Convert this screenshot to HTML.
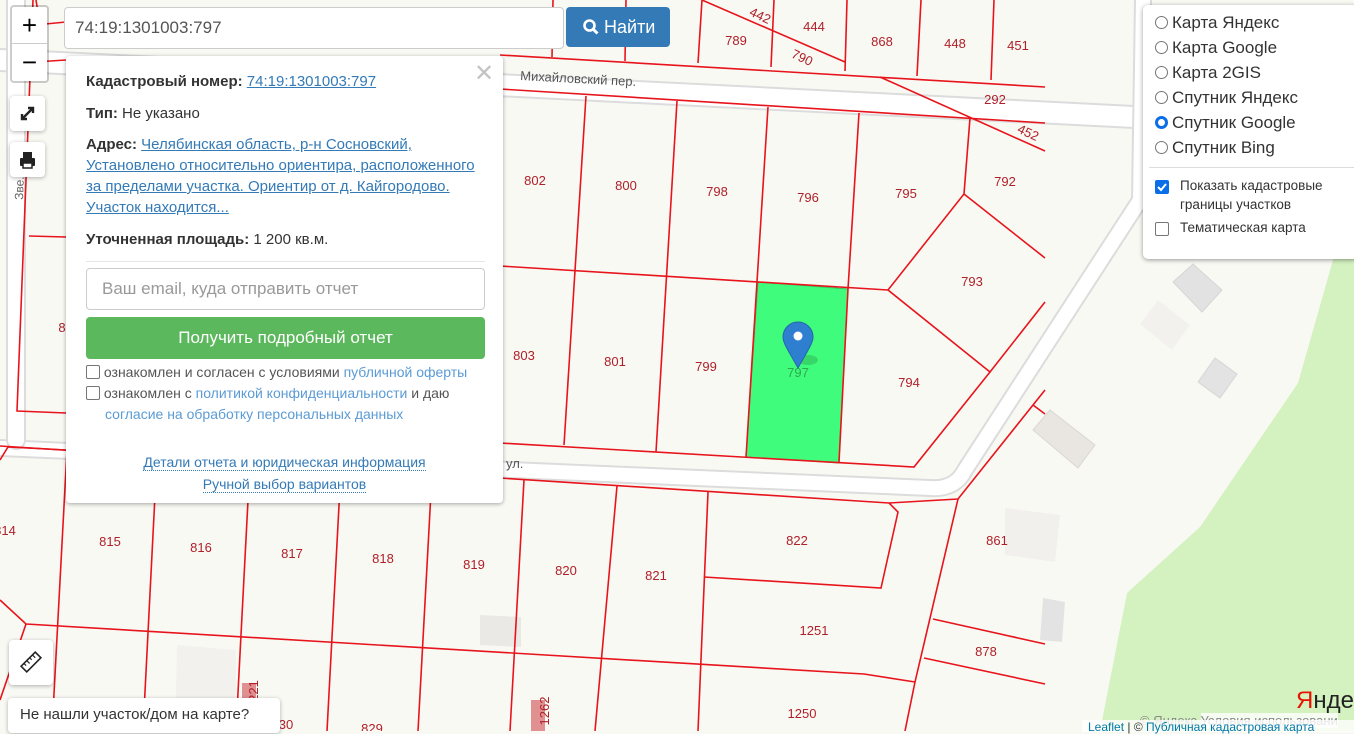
<!DOCTYPE html>
<html><head><meta charset="utf-8">
<style>
*{box-sizing:border-box;margin:0;padding:0}
body{width:1354px;height:731px;overflow:hidden;position:relative;background:#f9f9f4;font-family:"Liberation Sans",Arial,sans-serif;}
.abs{position:absolute}
.ctl{position:absolute;background:#fff;border:2px solid rgba(0,0,0,.2);border-radius:4px;background-clip:padding-box}
.popup{position:absolute;left:66px;top:56px;width:437px;height:447px;background:#fff;border-radius:4px;box-shadow:0 1px 4px rgba(0,0,0,.35);font-size:15px;color:#333}
.popup a{color:#337ab7;text-decoration:underline}
.popup b{font-weight:bold}
.cb{display:inline-block;width:14px;height:14px;border:1px solid #767676;border-radius:2px;background:#fff;vertical-align:-2px}
.lnk{color:#5b9bd5}
.layers{position:absolute;left:1143px;top:5px;width:215px;height:254px;background:#fff;border-radius:5px;box-shadow:0 1px 5px rgba(0,0,0,.4);color:#333}
.r{position:absolute;left:12px;font-size:17px;white-space:nowrap}
.rad{display:inline-block;width:13px;height:13px;border:1px solid #767676;border-radius:50%;vertical-align:-1px;margin-right:4px;background:#fff}
</style></head><body>
<svg class="abs" style="left:0;top:0" width="1354" height="731" viewBox="0 0 1354 731">
<polygon points="1354,180 1333,260 1298,383 1200,527 1127,593 1100,731 1354,731" fill="#d4f1c0"/>
<g fill="none" stroke-linecap="round" stroke-linejoin="round">
<path d="M0,60 L1354,128" stroke="#dcdcdc" stroke-width="24"/>
<path d="M0,60 L1354,128" stroke="#fff" stroke-width="20"/>
<path d="M0,448 L930,488 Q955,490 965,470 L1140,200 L1143,0" stroke="#dcdcdc" stroke-width="18"/>
<path d="M0,448 L930,488 Q955,490 965,470 L1140,200 L1143,0" stroke="#fff" stroke-width="14"/>
<path d="M16,0 L16,440" stroke="#dcdcdc" stroke-width="20"/>
<path d="M16,0 L16,440" stroke="#fff" stroke-width="16"/>
</g>
<g>
<polygon points="1173,282 1193,264 1222,290 1202,312" fill="#e2e2e2" stroke="#d6d6d6"/>
<polygon points="1140,324 1158,300 1190,325 1172,350" fill="#f2f1ee"/>
<polygon points="1198,382 1215,358 1237,374 1220,398" fill="#e3e3e3" stroke="#d6d6d6"/>
<polygon points="1033,430 1050,410 1095,445 1078,468" fill="#e9e6e2" stroke="#dbd8d4"/>
<polygon points="1005,508 1060,515 1055,562 1005,555" fill="#f2f0ed"/>
<polygon points="1043,598 1065,602 1062,642 1040,640" fill="#e3e3e3"/>
<polygon points="480,615 521,617 521,647 480,645" fill="#ebe9e6"/>
<polygon points="177,645 236,650 236,731 175,731" fill="#f3f1ee"/>
<rect x="242" y="683" width="14" height="48" fill="#e09090"/>
<rect x="531" y="700" width="14" height="31" fill="#e09090"/>
</g>
<polygon points="758,282 848,289 839,463 746,457" fill="#40fc7c" stroke="#39c060"/>
<g stroke="#e8141c" stroke-width="1.6" fill="none">
<path d="M33,0 L17,411 L66,413"/><path d="M29,236 L66,237"/>
<path d="M0,460 L8,447 L66,450"/>
<path d="M36,0 L40,25"/><path d="M35,25 L66,22"/><path d="M35,62 L66,60"/>
<path d="M500,55 L1045,87"/><path d="M500,89 L1045,123"/>
<path d="M553,0 L552,57"/><path d="M626,0 L625,61"/>
<path d="M702,0 L698,63"/><path d="M774,0 L771,67"/><path d="M847,0 L845,71"/><path d="M921,0 L917,76"/><path d="M994,0 L991,80"/>
<path d="M702,0 L845,62"/><path d="M880,77 L1045,151"/>
<path d="M586,96 L564,445"/><path d="M677,101 L656,452"/><path d="M768,107 L746,457"/><path d="M859,113 L848,289 L839,462"/>
<path d="M970,118 L964,194 L888,290 L990,372 L1045,302"/><path d="M964,194 L1045,258"/>
<path d="M500,266 L888,290"/><path d="M990,372 L914,467 L500,443"/>
<path d="M0,446 L889,503 L958,499 L1045,390"/><path d="M1033,405 L1045,414"/>
<path d="M889,503 L898,512 L881,588 L704,577"/>
<path d="M958,499 L915,682 L905,731"/>
<path d="M0,600 L26,624 L864,674 L915,682"/><path d="M26,624 L0,700"/>
<path d="M933,619 L1045,644"/><path d="M924,658 L1045,684"/>
<path d="M67,450 L52,731"/><path d="M157,456 L143,731"/><path d="M250,462 L236,731"/><path d="M341,468 L327,731"/><path d="M432,474 L418,731"/><path d="M524,480 L510,731"/><path d="M617,486 L595,731"/><path d="M708,492 L698,731"/>
</g>
<g font-family="Liberation Sans,Arial,sans-serif" font-size="13" fill="#b0202a" text-anchor="middle">
<text x="535" y="185">802</text><text x="626" y="190">800</text><text x="717" y="196">798</text><text x="808" y="202">796</text><text x="906" y="198">795</text><text x="1005" y="186">792</text><text x="972" y="286">793</text>
<text x="524" y="360">803</text><text x="615" y="366">801</text><text x="706" y="371">799</text><text x="909" y="387">794</text>
<text x="798" y="377" fill="#2fa850">797</text>
<text x="814" y="31">444</text><text x="736" y="45">789</text><text x="882" y="46">868</text><text x="955" y="48">448</text><text x="1018" y="50">451</text><text x="995" y="104">292</text>
<text x="760" y="20" transform="rotate(25 760 16)">442</text><text x="802" y="62" transform="rotate(25 802 58)">790</text><text x="1028" y="137" transform="rotate(25 1028 133)">452</text>
<text x="62" y="332">8</text>
<text x="5" y="535">814</text><text x="110" y="546">815</text><text x="201" y="552">816</text><text x="292" y="558">817</text><text x="383" y="563">818</text><text x="474" y="569">819</text><text x="566" y="575">820</text><text x="656" y="580">821</text><text x="797" y="545">822</text><text x="997" y="545">861</text><text x="814" y="635">1251</text><text x="986" y="656">878</text><text x="802" y="718">1250</text><text x="372" y="733">829</text><text x="286" y="729">30</text>
<text x="262" y="695" transform="rotate(-90 258 695)">221</text><text x="553" y="715" transform="rotate(-90 549 715)">1262</text>
</g>
<text x="520" y="80" font-family="Liberation Sans,Arial,sans-serif" font-size="13" fill="#555" transform="rotate(3 520 80)">Михайловский пер.</text>
<text x="506" y="468" font-family="Liberation Sans,Arial,sans-serif" font-size="13" fill="#555">ул.</text>
<text x="23" y="200" font-family="Liberation Sans,Arial,sans-serif" font-size="12" fill="#666" transform="rotate(-88 23 200)">Зве...я у</text>
<ellipse cx="808" cy="360" rx="10" ry="5" fill="rgba(0,0,0,.15)"/>
<path d="M798,368 C788,350 783,343 783,337 A15,15 0 0 1 813,337 C813,343 808,350 798,368 Z" fill="#2f7fd0" stroke="#2467ab"/>
<circle cx="798" cy="336" r="4.5" fill="#fff"/>
<text x="1296" y="708" font-family="Liberation Sans,Arial,sans-serif" font-size="24" fill="#e61400">Я<tspan fill="#222">ндекс</tspan></text>
</svg>

<div class="ctl" style="left:10px;top:5px;width:39px;height:78px">
<div style="height:37px;border-bottom:1px solid #ccc;text-align:center;font-size:26px;line-height:36px;color:#000">+</div>
<div style="text-align:center;font-size:26px;line-height:36px;color:#000">−</div>
</div>
<div class="ctl" style="left:10px;top:96px;width:35px;height:35px;border:none;box-shadow:0 1px 4px rgba(0,0,0,.3)">
<svg width="35" height="35"><path d="M12,23 L23,12 M18,12 H23 V17 M12,18 V23 H17" stroke="#222" stroke-width="2.4" fill="none"/></svg></div>
<div class="ctl" style="left:10px;top:142px;width:35px;height:35px;border:none;box-shadow:0 1px 4px rgba(0,0,0,.3)">
<svg width="35" height="35"><rect x="13" y="10" width="9" height="6" fill="#222"/><rect x="10" y="16" width="15" height="8" rx="1" fill="#222"/><rect x="13" y="21" width="9" height="5" fill="#fff" stroke="#222" stroke-width="1.5"/></svg></div>
<div class="ctl" style="left:9px;top:640px;width:44px;height:45px;border:none;box-shadow:0 1px 4px rgba(0,0,0,.3)">
<svg width="44" height="45"><g transform="rotate(-45 22 22)"><rect x="12" y="18" width="20" height="8" fill="none" stroke="#222" stroke-width="1.6"/><path d="M16,18 v3 M20,18 v4 M24,18 v3 M28,18 v4" stroke="#222" stroke-width="1.2"/></g></svg></div>

<div class="abs" style="left:64px;top:7px;width:500px;height:42px;background:#fff;border:1px solid #ccc;border-radius:4px;font-size:17px;color:#555;padding:10px 0 0 10px">74:19:1301003:797</div>
<div class="abs" style="left:566px;top:7px;width:104px;height:40px;background:#337ab7;border-radius:4px;color:#fff;font-size:18px;line-height:40px;padding-left:17px">
<svg width="16" height="16" style="vertical-align:-2px"><circle cx="6.5" cy="6.5" r="5" stroke="#fff" stroke-width="2.6" fill="none"/><path d="M10,10 L14.5,14.5" stroke="#fff" stroke-width="3"/></svg> Найти</div>

<div class="popup">
<div class="abs" style="left:408px;top:3px;font-size:24px;color:#c3c3c3">✕</div>
<div class="abs" style="left:20px;top:15px;line-height:21px;width:395px">
<div><b>Кадастровый номер:</b> <a>74:19:1301003:797</a></div>
<div style="margin-top:11px"><b>Тип:</b> Не указано</div>
<div style="margin-top:10px"><b>Адрес:</b> <a>Челябинская область, р-н Сосновский, Установлено относительно ориентира, расположенного за пределами участка. Ориентир от д. Кайгородово. Участок находится...</a></div>
<div style="margin-top:11px"><b>Уточненная площадь:</b> 1 200 кв.м.</div>
</div>
<div class="abs" style="left:20px;top:205px;width:399px;border-top:1px solid #e5e5e5"></div>
<div class="abs" style="left:20px;top:212px;width:399px;height:42px;border:1px solid #ccc;border-radius:4px;font-size:17px;color:#999;padding:10px 0 0 15px">Ваш email, куда отправить отчет</div>
<div class="abs" style="left:20px;top:261px;width:399px;height:42px;background:#5cb85c;border-radius:4px;color:#fff;font-size:17px;text-align:center;line-height:42px">Получить подробный отчет</div>
<div class="abs" style="left:20px;top:306px;font-size:14px;color:#555;line-height:21px;width:410px">
<div><span class="cb"></span> ознакомлен и согласен с условиями <span class="lnk">публичной оферты</span></div>
<div><span class="cb"></span> ознакомлен с <span class="lnk">политикой конфиденциальности</span> и даю<br><span style="padding-left:19px" class="lnk">согласие на обработку персональных данных</span></div>
</div>
<div class="abs" style="left:0;top:395px;width:437px;text-align:center;font-size:14px;line-height:22px;color:#337ab7">
<span style="border-bottom:1px dotted #337ab7">Детали отчета и юридическая информация</span><br><span style="border-bottom:1px dotted #337ab7">Ручной выбор вариантов</span></div>
</div>

<div class="layers">
<div class="r" style="top:8px"><span class="rad"></span>Карта Яндекс</div>
<div class="r" style="top:33px"><span class="rad"></span>Карта Google</div>
<div class="r" style="top:58px"><span class="rad"></span>Карта 2GIS</div>
<div class="r" style="top:83px"><span class="rad"></span>Спутник Яндекс</div>
<div class="r" style="top:108px"><span class="rad" style="border:3.5px solid #0a6ee8"></span>Спутник Google</div>
<div class="r" style="top:133px"><span class="rad"></span>Спутник Bing</div>
<div class="abs" style="left:6px;top:162px;width:205px;border-top:1px solid #ddd"></div>
<div class="abs" style="left:12px;top:175px;width:14px;height:14px;background:#0a6ee8;border-radius:2px"><svg width="14" height="14"><path d="M3,7 L6,10 L11,4" stroke="#fff" stroke-width="2" fill="none"/></svg></div>
<div class="abs" style="left:37px;top:171px;font-size:13.5px;line-height:19px;color:#333">Показать кадастровые<br>границы участков</div>
<div class="abs" style="left:12px;top:217px;width:14px;height:14px;border:1px solid #767676;border-radius:2px"></div>
<div class="abs" style="left:37px;top:215px;font-size:13.5px;color:#333">Тематическая карта</div>
</div>

<div class="abs" style="left:8px;top:698px;width:272px;height:35px;background:#fff;border-radius:4px;box-shadow:0 1px 4px rgba(0,0,0,.3);font-size:15px;color:#333;padding:8px 0 0 12px">Не нашли участок/дом на карте?</div>

<div class="abs" style="left:1140px;top:713px;font-size:13px;color:#888;white-space:nowrap">© Яндекс <span style="background:rgba(255,255,255,.8)">Условия использовани</span></div>
<div class="abs" style="left:1082px;top:720px;width:272px;height:12px;background:rgba(255,255,255,.8);font-size:12px;color:#333;padding-left:6px;white-space:nowrap;line-height:14px"><span style="color:#0078a8">Leaflet</span> | © <span style="color:#0078a8">Публичная кадастровая карта</span></div>
</body></html>
